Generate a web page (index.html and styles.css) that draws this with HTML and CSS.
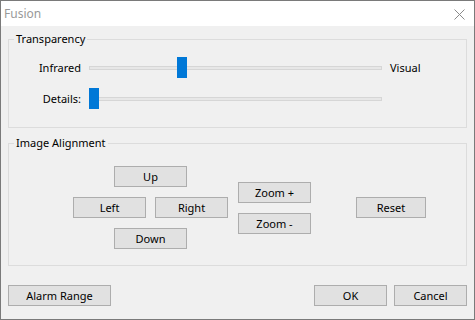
FILE: index.html
```html
<!DOCTYPE html>
<html>
<head>
<meta charset="utf-8">
<link rel="stylesheet" href="styles.css">
</head>
<body>
<div class="window">
  <div class="titlebar">
    <span class="title">Fusion</span>
    <svg class="close" width="11" height="11" viewBox="0 0 11 11"><path d="M0.5 0.5 L10.5 10.5 M10.5 0.5 L0.5 10.5" stroke="#8a8a8a" stroke-width="1"/></svg>
  </div>
  <div class="content">
    <div class="group group-transparency">
      <span class="group-title">Transparency</span>
      <div class="slider-row">
        <span class="slider-label">Infrared</span>
        <div class="slider">
          <div class="track"></div>
          <div class="thumb" style="left: 88px"></div>
        </div>
        <span class="slider-end">Visual</span>
      </div>
      <div class="slider-row">
        <span class="slider-label">Details:</span>
        <div class="slider">
          <div class="track"></div>
          <div class="thumb" style="left: 0px"></div>
        </div>
      </div>
    </div>
    <div class="group group-align">
      <span class="group-title">Image Alignment</span>
      <div class="cross">
        <button class="btn">Up</button>
        <div class="cross-mid">
          <button class="btn">Left</button>
          <button class="btn">Right</button>
        </div>
        <button class="btn btn-down">Down</button>
      </div>
      <div class="zoom">
        <button class="btn">Zoom +</button>
        <button class="btn">Zoom -</button>
      </div>
      <button class="btn btn-reset">Reset</button>
    </div>
    <div class="footer">
      <button class="btn btn-alarm">Alarm Range</button>
      <div class="footer-right">
        <button class="btn">OK</button>
        <button class="btn">Cancel</button>
      </div>
    </div>
  </div>
</div>
</body>
</html>
```
FILE: styles.css
```css
* { box-sizing: border-box; }
html, body { margin: 0; padding: 0; }
body {
  width: 475px;
  height: 320px;
  font-family: "Noto Sans", "Open Sans", sans-serif;
  font-size: 11px;
  color: #000;
}
.window {
  width: 475px;
  height: 320px;
  border: 1px solid #7a7a7a;
  background: #f0f0f0;
  display: flex;
  flex-direction: column;
}
.titlebar {
  height: 25px;
  background: #fff;
  display: flex;
  align-items: center;
  justify-content: space-between;
  padding: 0 9px 0 3px;
  flex: none;
}
.title {
  color: #999;
  font-size: 12px;
  line-height: 16px;
}
.close { display: block; margin-top: 1px; }
.content {
  padding: 13px 7px 0 7px;
  display: flex;
  flex-direction: column;
}
.group {
  position: relative;
  border: 1px solid #dcdcdc;
}
.group-title {
  position: absolute;
  left: 5px;
  top: -9px;
  padding: 0 2px;
  background: #f0f0f0;
  line-height: 16px;
}
.group-transparency {
  height: 89px;
  padding: 17px 0 0 0;
  display: flex;
  flex-direction: column;
  gap: 10px;
}
.slider-row {
  display: flex;
  align-items: center;
  height: 21px;
}
.slider-label {
  width: 72px;
  text-align: right;
  flex: none;
}
.slider {
  position: relative;
  width: 293px;
  height: 21px;
  margin-left: 8px;
  flex: none;
}
.track {
  position: absolute;
  left: 0;
  right: 0;
  top: 9px;
  height: 4px;
  background: #e7e7e7;
  border: 1px solid #d6d6d6;
}
.thumb {
  position: absolute;
  top: 0;
  width: 10px;
  height: 21px;
  background: #0078d7;
}
.slider-end { margin-left: 8px; }
.group-align {
  margin-top: 15px;
  height: 123px;
  display: flex;
  align-items: center;
  padding: 6px 0 0 64px;
}
.cross {
  display: flex;
  flex-direction: column;
  align-items: center;
  gap: 10px;
  width: 155px;
}
.cross-mid {
  display: flex;
  gap: 9px;
}
.btn-down { margin-top: 2px; }
.zoom {
  display: flex;
  flex-direction: column;
  gap: 10px;
  margin-left: 10px;
}
.btn {
  font-family: inherit;
  font-size: 11px;
  color: #000;
  width: 73px;
  height: 21px;
  padding: 0;
  margin: 0;
  background: #e1e1e1;
  border: 1px solid #adadad;
  border-radius: 0;
  line-height: 19px;
}
.btn-reset { width: 70px; margin-left: 45px; }
.footer {
  margin-top: 19px;
  display: flex;
  justify-content: space-between;
}
.btn-alarm { width: 103px; }
.footer-right {
  display: flex;
  gap: 7px;
}
```
